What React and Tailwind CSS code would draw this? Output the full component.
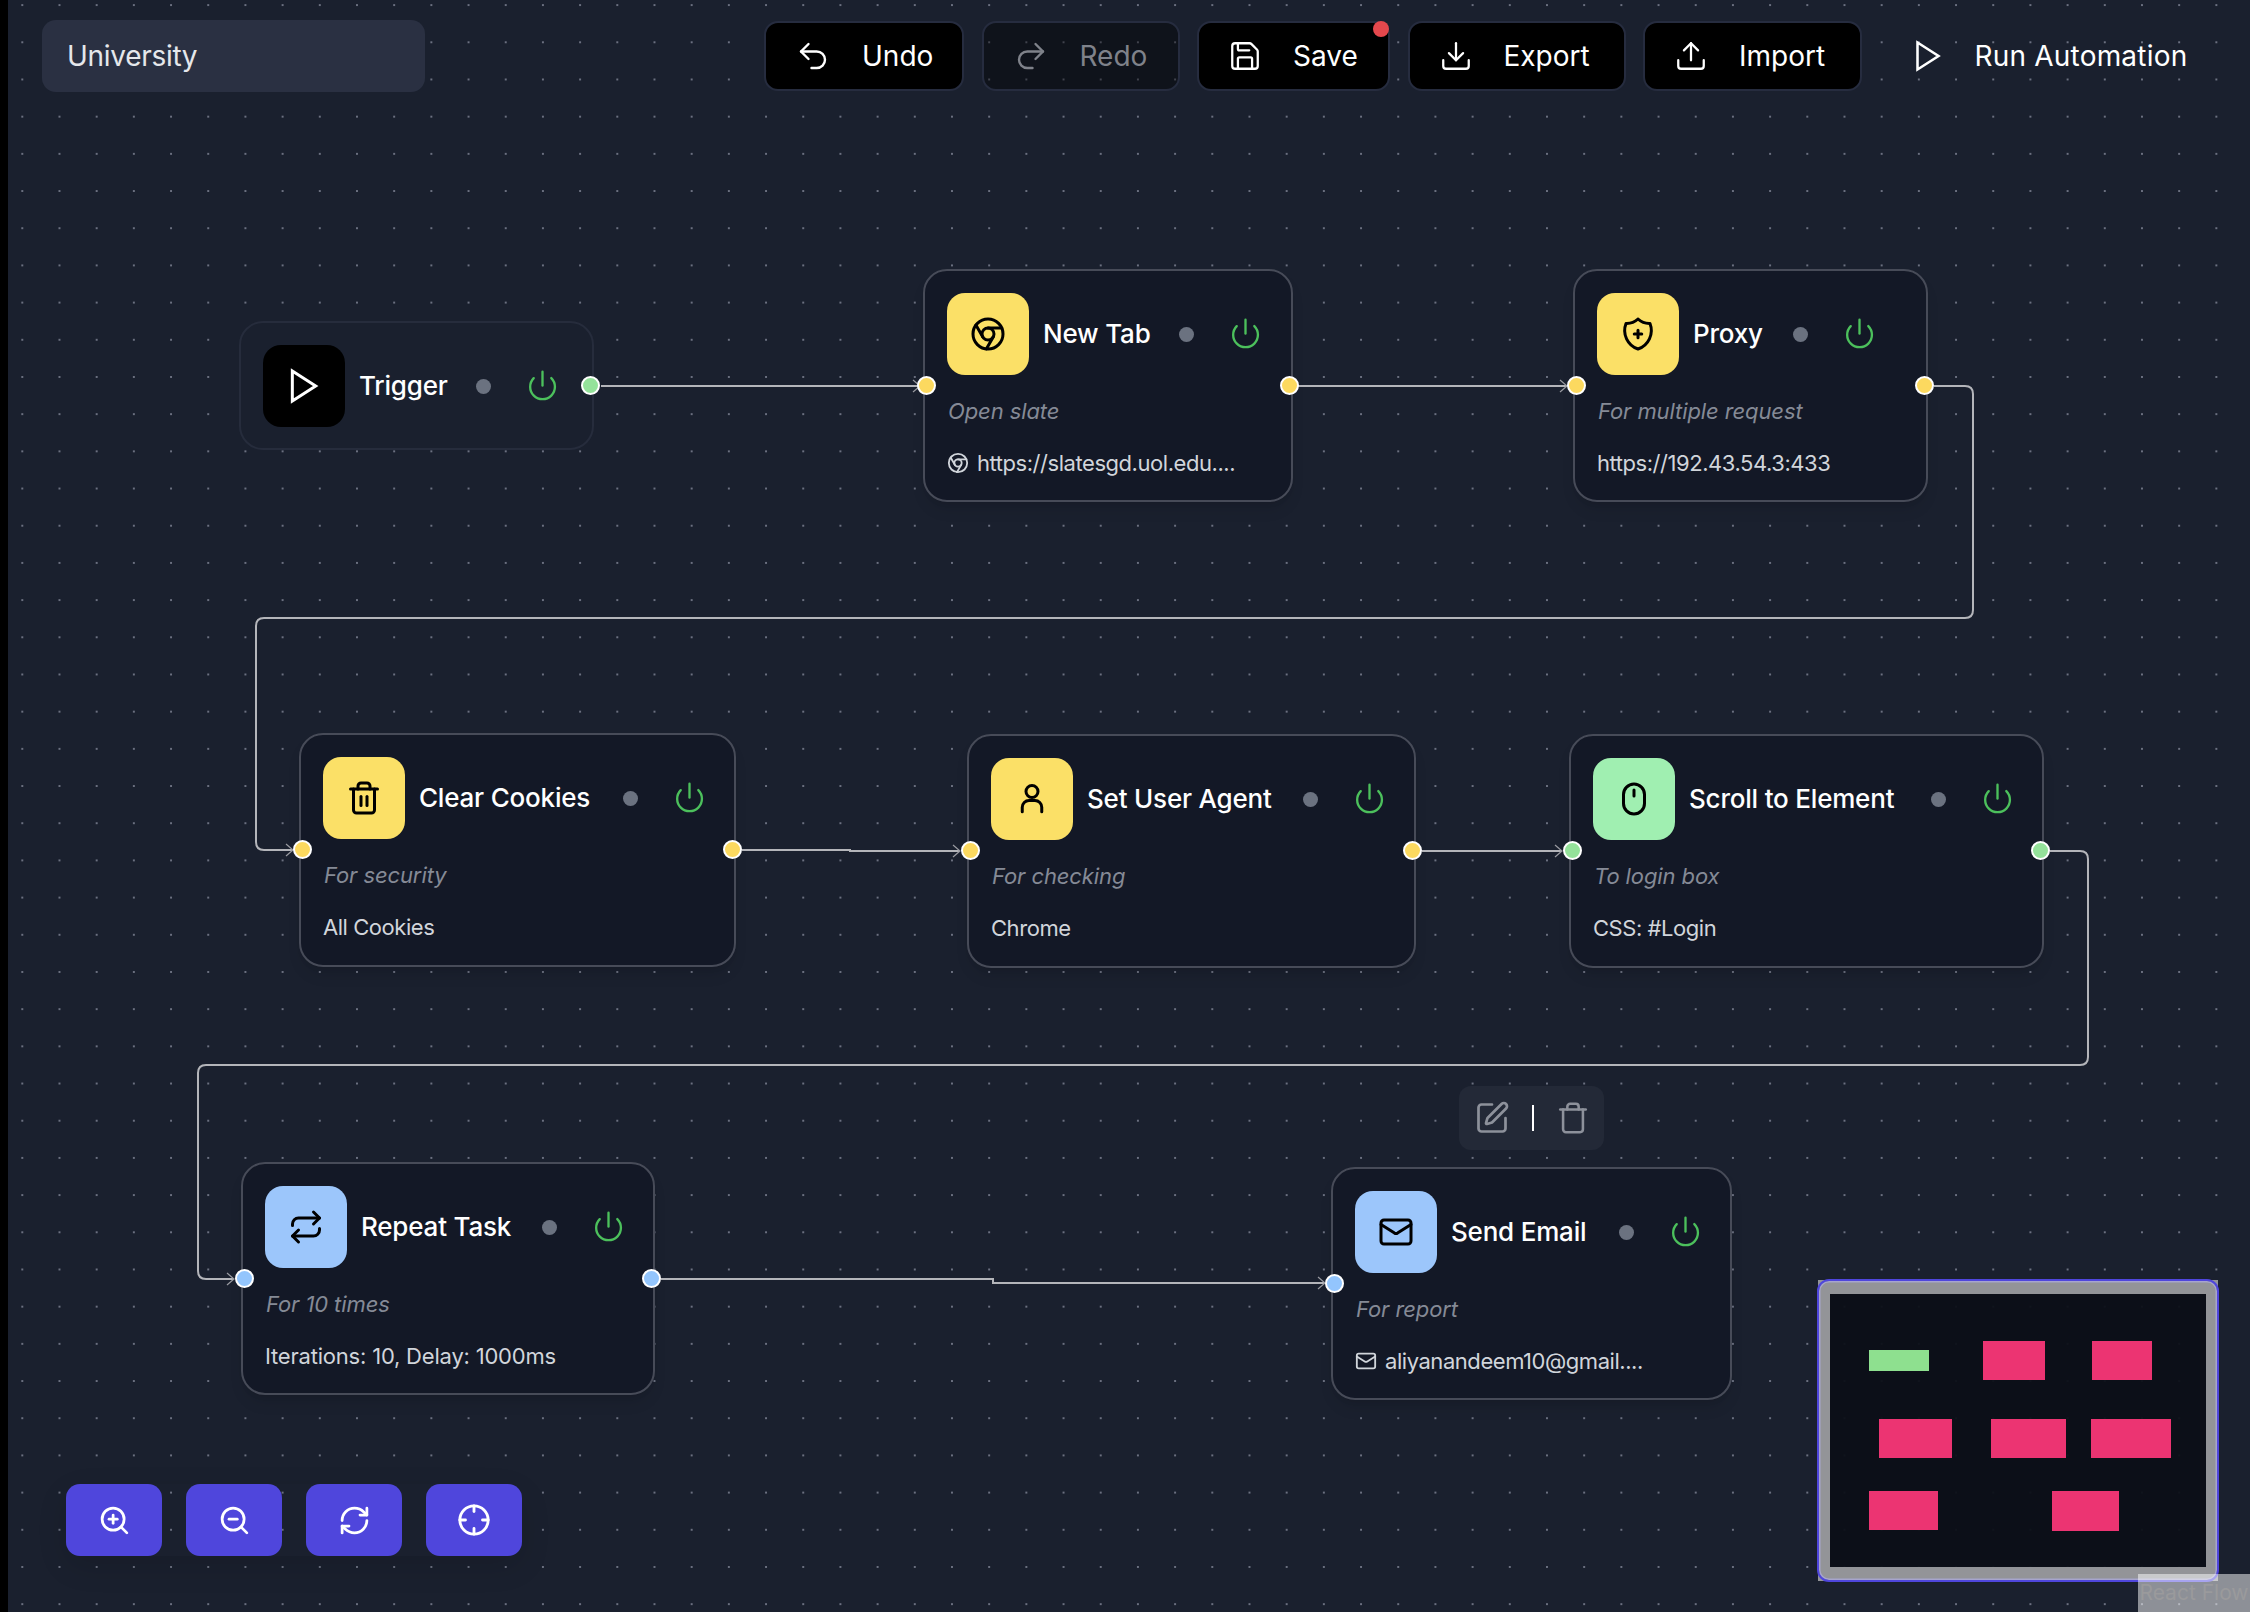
import React from "react";
import {
  Undo2, Redo2, Save, Download, Upload, Power, Chrome, Trash2, Mouse,
  Repeat, Mail, ZoomIn, ZoomOut, RefreshCw, Crosshair, SquarePen, Trash,
} from "lucide-react";

const font = "font-['Inter','Noto_Sans',sans-serif]";

function Glyph({ size = 24, strokeWidth = 2, children }) {
  return (
    <svg width={size} height={size} viewBox="0 0 24 24" fill="none" stroke="currentColor" strokeWidth={strokeWidth} strokeLinecap="round" strokeLinejoin="round" className="shrink-0">
      {children}
    </svg>
  );
}
const PlayIcon = (p) => (
  <Glyph {...p}>
    <polygon points="5 3 19 12 5 21" strokeLinejoin="miter" />
  </Glyph>
);
const ShieldIcon = (p) => (
  <Glyph {...p}>
    <path d="M12 2a11 11 0 0 0 8 3a13 13 0 0 1 -8 17a13 13 0 0 1 -8 -17a11 11 0 0 0 8 -3" />
    <path d="M12 9.5v5M9.5 12h5" />
  </Glyph>
);
const UserIcon = (p) => (
  <Glyph {...p}>
    <circle cx="12" cy="7" r="4" />
    <path d="M5.5 20.5V17.5A4.5 4.5 0 0 1 10 13H14A4.5 4.5 0 0 1 18.5 17.5V20.5" />
  </Glyph>
);

function ToolButton({ icon: Icon, label, cls, muted, size = 34, children }) {
  return (
    <button className={`relative flex h-[70px] items-center rounded-[14px] border-2 border-[#262c3f] pl-[29px] ${muted ? "bg-black/40 text-[#7f828a]" : "bg-black text-white"} ${cls}`}>
      <Icon size={size} strokeWidth={1.6} className="shrink-0" />
      <span className="ml-[31px] text-[28px] tracking-[0px] whitespace-nowrap">{label}</span>
      {children}
    </button>
  );
}

function Handle({ color, side, yCls }) {
  return (
    <span className={`absolute z-10 h-[19px] w-[19px] rounded-full border-2 border-white ${color} ${side} ${yCls}`} />
  );
}

function FlowNode({ cls, iconBg, icon: Icon, title, titleW, desc, detail, detailCls = "tracking-[-0.45px]", detailIcon: DetailIcon, handle, left = true, right = true, plain }) {
  return (
    <div className={`absolute rounded-[24px] border-2 ${plain ? "border-[#262c3c] bg-[#1a202e]" : "border-[#474b58] bg-[#131826] shadow-lg"} ${cls}`}>
      <div className="flex pl-[22px] pt-[22px]">
        <div className={`flex h-[82px] w-[82px] shrink-0 items-center justify-center rounded-[18px] ${iconBg} ${plain ? "text-white" : "text-black"}`}>
          <Icon size={plain ? 40 : 36} strokeWidth={plain ? 1.8 : 2} />
        </div>
        <div className="ml-[14px] flex h-[82px] items-center">
          <span className={`${titleW} text-[26px] leading-none font-medium tracking-[-0.2px] whitespace-nowrap text-white`}>{title}</span>
          <span className={`${plain ? "ml-[30px]" : "ml-[31px]"} h-[15px] w-[15px] shrink-0 rounded-full bg-[#6b7280]`} />
          <Power size={33} strokeWidth={1.7} className="-mt-[1px] ml-[35px] shrink-0 text-[#4cc05c]" />
        </div>
      </div>
      {desc && (
        <>
          <div className="mt-[21px] pl-[23px] text-[22px] leading-[30px] tracking-[-0.1px] text-[#858a96] italic">{desc}</div>
          <div className={`mt-[22px] flex items-center pl-[22px] text-[22px] leading-[30px] text-[#d1d5db] ${detailCls}`}>
            {DetailIcon && <DetailIcon size={22} strokeWidth={2} className="mr-[8px] shrink-0" />}
            <span className="whitespace-nowrap">{detail}</span>
          </div>
        </>
      )}
      {left && <Handle color={handle} side="left-[-8px]" yCls={plain ? "top-[53px]" : "top-[105px]"} />}
      {right && <Handle color={handle} side="right-[-8px]" yCls={plain ? "top-[53px]" : "top-[105px]"} />}
    </div>
  );
}

const edges = [
  "M601 386 H920",
  "M1298 386 H1567",
  "M1934 386 H1965 Q1973 386 1973 394 V610 Q1973 618 1965 618 H264 Q256 618 256 626 V842 Q256 850 264 850 H293",
  "M742 850 H850 V851 H960",
  "M1422 851 H1562",
  "M2050 851 H2080 Q2088 851 2088 859 V1057 Q2088 1065 2080 1065 H206 Q198 1065 198 1073 V1271 Q198 1279 206 1279 H234",
  "M661 1279 H993 V1283 H1325",
];
const arrows = [[920, 386], [1567, 386], [293, 850], [960, 851], [1562, 851], [234, 1279], [1325, 1283]];

const miniNodes = [
  "left-[39px] top-[56px] h-[21px] w-[60px] bg-[#8ee08f]",
  "left-[153px] top-[47px] h-[39px] w-[62px] bg-[#ec3472]",
  "left-[262px] top-[47px] h-[39px] w-[60px] bg-[#ec3472]",
  "left-[49px] top-[125px] h-[39px] w-[73px] bg-[#ec3472]",
  "left-[161px] top-[125px] h-[39px] w-[75px] bg-[#ec3472]",
  "left-[261px] top-[125px] h-[39px] w-[80px] bg-[#ec3472]",
  "left-[39px] top-[197px] h-[39px] w-[69px] bg-[#ec3472]",
  "left-[222px] top-[197px] h-[40px] w-[67px] bg-[#ec3472]",
];

export default function App() {
  return (
    <div className={`relative h-[1612px] w-[2250px] overflow-hidden border-l-8 border-black bg-[#1a202e] bg-[radial-gradient(circle,#6b7080_1px,transparent_1.3px)] bg-size-[37.2px_37.2px] bg-position-[-4.3px_-13.5px] ${font}`}>
      {/* edges */}
      <svg className="absolute top-0 left-[-8px] h-[1612px] w-[2250px]" viewBox="0 0 2250 1612" fill="none">
        {edges.map((d) => (
          <path key={d} d={d} stroke="#b4b5ba" strokeWidth="2" />
        ))}
        {arrows.map(([x, y]) => (
          <path key={`${x}-${y}`} d={`M${x - 7} ${y - 6} L${x} ${y} L${x - 7} ${y + 6}`} stroke="#9a9ba1" strokeWidth="1.2" />
        ))}
      </svg>

      {/* header */}
      <header className="relative flex items-start pt-[20px] pl-[34px]">
        <div className="flex h-[72px] w-[383px] items-center rounded-[14px] bg-[#2a3042] pl-[25px] text-[28px] tracking-[-0.3px] text-[#e5e7eb]">University</div>
        <div className="ml-[339px] flex gap-[17.5px] pt-[1px]">
          <ToolButton icon={Undo2} label="Undo" cls="w-[200px]" size={36} />
          <ToolButton icon={Redo2} label="Redo" cls="w-[198px]" size={36} muted />
          <ToolButton icon={Save} label="Save" cls="w-[193px]">
            <span className="absolute top-[-2px] right-[-1px] h-[16px] w-[16px] rounded-full bg-[#e5484d]" />
          </ToolButton>
          <ToolButton icon={Download} label="Export" cls="w-[218px]" />
          <ToolButton icon={Upload} label="Import" cls="w-[219px]" />
          <div className="ml-[30px] flex h-[70px] items-center text-white">
            <PlayIcon size={36} strokeWidth={1.7} />
            <span className="ml-[29px] text-[28px] tracking-[0.2px] whitespace-nowrap">Run Automation</span>
          </div>
        </div>
      </header>

      {/* nodes */}
      <FlowNode plain cls="left-[231px] top-[321px] h-[129px] w-[355px]" iconBg="bg-black" icon={PlayIcon} title="Trigger" titleW="w-[87px]" handle="bg-[#94e29a]" left={false} />
      <FlowNode cls="left-[915px] top-[269px] h-[233px] w-[370px]" iconBg="bg-[#fbe067]" icon={Chrome} title="New Tab" titleW="w-[105px]" desc="Open slate" detail="https://slatesgd.uol.edu...." detailIcon={Chrome} handle="bg-[#fcd95f]" />
      <FlowNode cls="left-[1565px] top-[269px] h-[233px] w-[355px]" iconBg="bg-[#fbe067]" icon={ShieldIcon} title="Proxy" titleW="w-[69px]" desc="For multiple request" detail="https://192.43.54.3:433" handle="bg-[#fcd95f]" />
      <FlowNode cls="left-[291px] top-[733px] h-[234px] w-[437px]" iconBg="bg-[#fbe067]" icon={Trash2} title="Clear Cookies" titleW="w-[173px]" desc="For security" detail="All Cookies" handle="bg-[#fcd95f]" />
      <FlowNode cls="left-[959px] top-[734px] h-[234px] w-[449px]" iconBg="bg-[#fbe067]" icon={UserIcon} title="Set User Agent" titleW="w-[185px]" desc="For checking" detail="Chrome" handle="bg-[#fcd95f]" />
      <FlowNode cls="left-[1561px] top-[734px] h-[234px] w-[475px]" iconBg="bg-[#a0efb1]" icon={Mouse} title="Scroll to Element" titleW="w-[211px]" desc="To login box" detail="CSS: #Login" handle="bg-[#94e29a]" />
      <FlowNode cls="left-[233px] top-[1162px] h-[233px] w-[414px]" iconBg="bg-[#9cc6fb]" icon={Repeat} title="Repeat Task" titleW="w-[150px]" desc="For 10 times" detail="Iterations: 10, Delay: 1000ms" detailCls="tracking-[-0.2px]" handle="bg-[#93c5fd]" />
      <FlowNode cls="left-[1323px] top-[1167px] h-[233px] w-[401px]" iconBg="bg-[#9cc6fb]" icon={Mail} title="Send Email" titleW="w-[137px]" desc="For report" detail="aliyanandeem10@gmail...." detailIcon={Mail} handle="bg-[#93c5fd]" right={false} />

      {/* node toolbar */}
      <div className="absolute top-[1086px] left-[1451px] flex h-[64px] w-[145px] items-center justify-center gap-[22px] rounded-[12px] bg-[#232937] text-[#8d919b]">
        <SquarePen size={36} strokeWidth={1.8} className="shrink-0" />
        <span className="h-[26px] w-[2px] shrink-0 bg-white" />
        <Trash size={34} strokeWidth={1.8} className="shrink-0" />
      </div>

      {/* zoom controls */}
      <div className="absolute top-[1484px] left-[58px] flex gap-[24px] rounded-[16px] shadow-[0_10px_30px_rgba(0,0,0,0.12)]">
        {[[ZoomIn, 33], [ZoomOut, 33], [RefreshCw, 33], [Crosshair, 34]].map(([Icon, size], i) => (
          <button key={i} className="flex h-[72px] w-[96px] items-center justify-center rounded-[14px] bg-[#4f46dc] text-white">
            <Icon size={size} strokeWidth={2} />
          </button>
        ))}
      </div>

      {/* minimap */}
      <div className="absolute top-[1280px] left-[1810px] h-[301px] w-[400px] border-x-[12px] border-y-[14px] border-[#939498] bg-[#0c0f17]/95">
        <div className="absolute inset-[-15px_-13px] rounded-[12px] border-[2.5px] border-[#4f46dc] shadow-[inset_0_0_0_1.5px_rgba(180,176,240,0.6)]" />
        {miniNodes.map((c) => (
          <div key={c} className={`absolute ${c}`} />
        ))}
      </div>

      {/* attribution */}
      <div className="absolute right-0 bottom-0 flex h-[38px] w-[112px] items-center justify-center bg-white/50 text-[21px] whitespace-nowrap text-[#9a9a9c]">React Flow</div>
    </div>
  );
}
